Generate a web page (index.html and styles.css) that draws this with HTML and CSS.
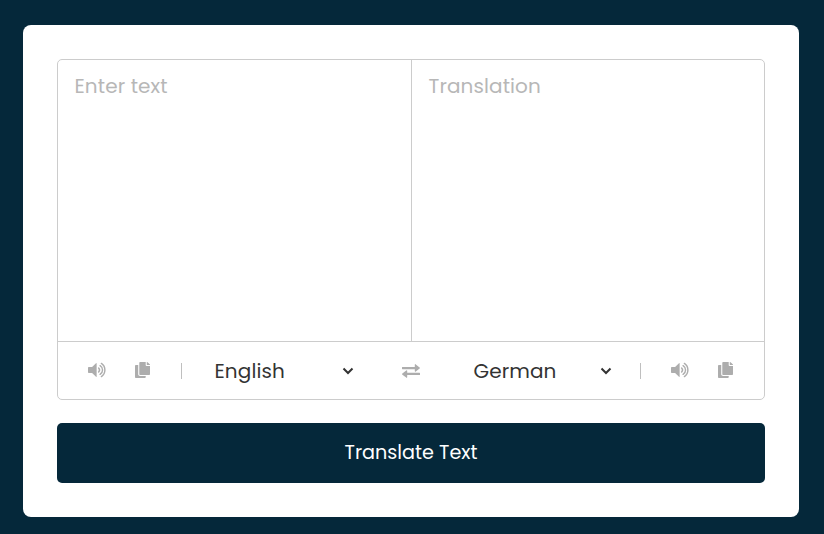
FILE: index.html
```html
<!DOCTYPE html>
<html lang="en">
<head>
<meta charset="utf-8">
<title>Translator</title>
<link rel="stylesheet" href="styles.css">
</head>
<body>
<svg class="defs" aria-hidden="true">
  <symbol id="volume" viewBox="0 0 20 16"><path d="M.8 4.9h3.5L8.4.9q.7-.5.7.4v13.4q0 .9-.7.4l-4.1-4H.8q-.8 0-.8-.8V5.7q0-.8.8-.8z" fill="currentColor"/><path d="M11.2 5.9q2 2.1 0 4.2M12.7 3.4c3.5 2.2 3.5 7 0 9.2M14.1 1.1c4.9 3.2 4.9 10.6 0 13.8" fill="none" stroke="currentColor" stroke-width="1.5" stroke-linecap="round"/></symbol>
  <symbol id="copy" viewBox="0 0 448 512" preserveAspectRatio="none"><path fill="currentColor" d="M320 448v40c0 13.255-10.745 24-24 24H24c-13.255 0-24-10.745-24-24V120c0-13.255 10.745-24 24-24h72v296c0 30.879 25.121 56 56 56h168zm0-344V0H152c-13.255 0-24 10.745-24 24v368c0 13.255 10.745 24 24 24h272c13.255 0 24-10.745 24-24V128H344c-13.2 0-24-10.8-24-24zm120.971-31.029L375.029 7.029A24 24 0 0 0 358.059 0H352v96h96v-6.059a24 24 0 0 0-7.029-16.97z"/></symbol>
  <symbol id="chevron" viewBox="0 0 12 8"><path d="M1.5 1.5 6 6l4.5-4.5" fill="none" stroke="currentColor" stroke-width="2"/></symbol>
</svg>
<main class="container">
  <div class="wrapper">
    <div class="text-input">
      <textarea class="from-text" placeholder="Enter text"></textarea>
      <textarea class="to-text" placeholder="Translation"></textarea>
    </div>
    <div class="controls">
      <div class="side from">
        <div class="icons">
          <svg class="volume"><use href="#volume"/></svg>
          <svg class="copy"><use href="#copy"/></svg>
        </div>
        <div class="select"><span class="english">English</span><svg class="chevron"><use href="#chevron"/></svg></div>
      </div>
      <svg class="exchange" viewBox="0 0 18 14"><path d="M.4 2.9h12.4V.9q0-1.3 1-.5l3.8 3q.8.6 0 1.2l-3.8 2.9q-1 .8-1-.5V5.2H.4Q0 5.2 0 4.8V3.3q0-.4.4-.4zM17.6 8.8H5.2V7q0-1.3-1-.5l-3.8 3q-.8.6 0 1.2l3.8 2.9q1 .8 1-.5v-2H17.6q.4 0 .4-.4V9.2q0-.4-.4-.4z" fill="currentColor"/></svg>
      <div class="side to">
        <div class="select"><span class="german">German</span><svg class="chevron"><use href="#chevron"/></svg></div>
        <div class="icons">
          <svg class="volume"><use href="#volume"/></svg>
          <svg class="copy"><use href="#copy"/></svg>
        </div>
      </div>
    </div>
  </div>
  <button class="translate"><span>Translate Text</span></button>
</main>
</body>
</html>
```
FILE: styles.css
```css
* { box-sizing: border-box; margin: 0; padding: 0; }
body {
  height: 534px;
  padding: 25px 25px 17px 23px;
  overflow: hidden;
  background: #05283a;
  font-family: Poppins, Inter, sans-serif;
}
.defs { display: none; }
.container {
  height: 492px;
  padding: 34px;
  background: #fff;
  border-radius: 8px;
}
.wrapper {
  height: 341px;
  border: 1px solid #ccc;
  border-radius: 5px;
}
.text-input {
  display: flex;
  height: 282px;
  border-bottom: 1px solid #ccc;
}
textarea {
  width: 353px;
  height: 281px;
  padding: 13px 16.5px;
  border: 0;
  outline: 0;
  resize: none;
  background: none;
  font: 400 20px/26px Poppins, Inter, sans-serif;
  letter-spacing: .1px;
}
textarea::placeholder { color: #b7b7b7; opacity: 1; }
.to-text { border-left: 1px solid #ccc; }
.controls {
  display: flex;
  align-items: center;
  height: 57px;
  padding: 0 30px;
}
.side { display: flex; align-items: center; }
.from { width: 314px; }
.to { flex: 1; justify-content: space-between; }
.icons {
  display: flex;
  align-items: center;
  height: 16px;
  color: #adadad;
}
.from .icons { width: 94px; border-right: 1px solid #bfbfbf; }
.to .icons { width: 94px; padding-left: 30px; border-left: 1px solid #bfbfbf; }
.icons svg { flex: none; margin-top: -2px; }
.volume { width: 19px; height: 16px; }
.icons .copy { width: 15px; height: 16px; margin-left: 28px; }
.select {
  display: flex;
  align-items: center;
  justify-content: space-between;
  width: 138px;
  color: #333;
  font-size: 20px;
  line-height: 26px;
  letter-spacing: .1px;
}
.from .select { width: 139px; margin-left: 32.5px; }
.to .select { margin-left: 53.5px; }
.chevron { width: 12px; height: 8px; }
.exchange { width: 18px; height: 14px; color: #adadad; }
.translate {
  display: flex;
  align-items: center;
  justify-content: center;
  width: 100%;
  height: 60px;
  margin-top: 23px;
  border: 0;
  border-radius: 5px;
  background: #05283a;
  color: #fff;
  font: 400 19.2px/26px Poppins, Inter, sans-serif;
}
```
